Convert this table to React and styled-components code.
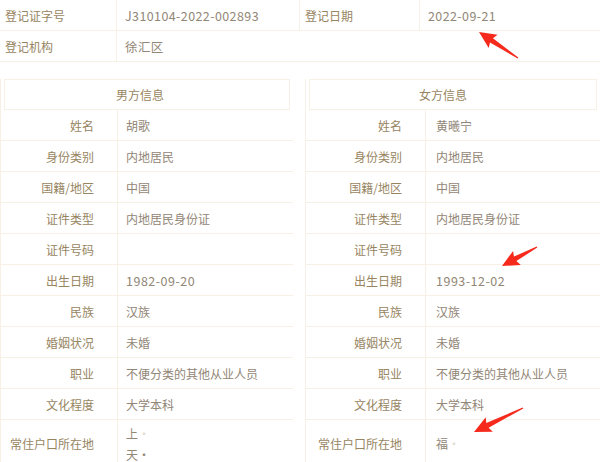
import React from "react";
import styled, { createGlobalStyle } from "styled-components";

const GlobalStyle = createGlobalStyle`
  html, body {
    margin: 0;
    padding: 0;
    background: #ffffff;
  }
  body {
    font-family: "Noto Sans CJK SC", "Noto Sans", sans-serif;
    font-size: 12px;
  }
`;

const LINE = "#f6f1e4";

const Page = styled.div`
  position: relative;
  width: 600px;
  height: 462px;
  overflow: hidden;
  background: #ffffff;
`;

const TopTable = styled.div`
  display: grid;
  grid-template-columns: 117px 183px 120px 1fr;
  grid-auto-rows: 31px;
`;

const TopCell = styled.div`
  display: flex;
  align-items: center;
  padding-left: ${(p) => (p.$value ? "8px" : "5px")};
  color: ${(p) => (p.$value ? "#928676" : "#978562")};
  border-bottom: 1px solid ${LINE};
  border-right: ${(p) => (p.$divider ? `1px solid ${LINE}` : "none")};
  font-size: ${(p) => (p.$value ? "12.5px" : "12px")};
  letter-spacing: ${(p) => (p.$value ? "0.4px" : "0")};
`;

const Panels = styled.div`
  display: flex;
  gap: 12px;
  margin-top: 17px;
`;

const Panel = styled.div`
  width: ${(p) => p.$width}px;
  display: flex;
  flex-direction: column;
  border-left: 1px solid ${LINE};
`;

const Heading = styled.div`
  height: 31px;
  margin: 0 3px 0 3px;
  display: flex;
  align-items: center;
  justify-content: center;
  padding-right: ${(p) => p.$shift}px;
  color: #978562;
  border: 1px solid ${LINE};
  box-sizing: border-box;
`;

const Row = styled.div`
  display: grid;
  grid-template-columns: ${(p) => p.$labelWidth}px 1fr;
  height: ${(p) => (p.$tall ? 48 : 31)}px;
  border-bottom: 1px solid ${LINE};
  box-sizing: border-box;
`;

const Label = styled.div`
  display: flex;
  align-items: center;
  justify-content: flex-end;
  padding-right: 23px;
  color: #978562;
  border-right: 1px solid ${LINE};
  white-space: nowrap;
`;

const Value = styled.div`
  display: flex;
  flex-direction: column;
  justify-content: center;
  padding-left: ${(p) => p.$pad}px;
  color: #928676;
  line-height: 21px;
  white-space: nowrap;
  font-size: ${(p) => (p.$digits ? "12.5px" : "12px")};
  letter-spacing: ${(p) => (p.$digits ? "0.5px" : "0")};
`;

const Faded = styled.span`
  color: #e2dbd0;
`;

const Arrows = styled.svg`
  position: absolute;
  left: 0;
  top: 0;
  pointer-events: none;
`;

const male = [
  ["姓名", "胡歌"],
  ["身份类别", "内地居民"],
  ["国籍/地区", "中国"],
  ["证件类型", "内地居民身份证"],
  ["证件号码", ""],
  ["出生日期", "1982-09-20", true],
  ["民族", "汉族"],
  ["婚姻状况", "未婚"],
  ["职业", "不便分类的其他从业人员"],
  ["文化程度", "大学本科"],
];

const female = [
  ["姓名", "黄曦宁"],
  ["身份类别", "内地居民"],
  ["国籍/地区", "中国"],
  ["证件类型", "内地居民身份证"],
  ["证件号码", ""],
  ["出生日期", "1993-12-02", true],
  ["民族", "汉族"],
  ["婚姻状况", "未婚"],
  ["职业", "不便分类的其他从业人员"],
  ["文化程度", "大学本科"],
];

// tip (tx, ty) -> tail (sx, sy), tapering shaft
function arrowPoints(tx, ty, sx, sy) {
  const dx = sx - tx;
  const dy = sy - ty;
  const len = Math.hypot(dx, dy);
  const ux = dx / len;
  const uy = dy / len;
  const nx = -uy;
  const ny = ux;
  const head = 17;
  const hw = 8;
  const sw = 2.6;
  const bx = tx + ux * head;
  const by = ty + uy * head;
  const pts = [
    [tx, ty],
    [bx + nx * hw, by + ny * hw],
    [bx - ux * 2 + nx * sw, by - uy * 2 + ny * sw],
    [sx + nx * 0.6, sy + ny * 0.6],
    [sx - nx * 0.6, sy - ny * 0.6],
    [bx - ux * 2 - nx * sw, by - uy * 2 - ny * sw],
    [bx - nx * hw, by - ny * hw],
  ];
  return pts.map((p) => p.map((v) => v.toFixed(1)).join(",")).join(" ");
}

function InfoPanel({ title, rows, width, labelWidth, pad, shift, address }) {
  return (
    <Panel $width={width}>
      <Heading $shift={shift}>{title}</Heading>
      {rows.map(([label, value, digits]) => (
        <Row key={label} $labelWidth={labelWidth}>
          <Label>{label}</Label>
          <Value $pad={pad} $digits={digits}>
            {value}
          </Value>
        </Row>
      ))}
      <Row $labelWidth={labelWidth} $tall>
        <Label>常住户口所在地</Label>
        <Value $pad={pad}>
          <span>
            {address[0]}
            <Faded>·</Faded>
          </span>
          <span>{address[1]}</span>
        </Value>
      </Row>
    </Panel>
  );
}

export default function App() {
  return (
    <>
      <GlobalStyle />
      <Page>
        <TopTable>
          <TopCell $divider>登记证字号</TopCell>
          <TopCell $value $divider>
            J310104-2022-002893
          </TopCell>
          <TopCell $divider>登记日期</TopCell>
          <TopCell $value>2022-09-21</TopCell>
          <TopCell $divider>登记机构</TopCell>
          <TopCell $value>徐汇区</TopCell>
          <TopCell />
          <TopCell />
        </TopTable>
        <Panels>
          <InfoPanel
            title="男方信息"
            rows={male}
            width={293}
            labelWidth={117}
            pad={8}
            shift={14}
            address={["上", "天·"]}
          />
          <InfoPanel
            title="女方信息"
            rows={female}
            width={295}
            labelWidth={120}
            pad={10}
            shift={20}
            address={["福", ""]}
          />
        </Panels>
        <Arrows width="600" height="462" viewBox="0 0 600 462">
          <polygon points={arrowPoints(479, 32, 518, 58)} fill="#f52a1c" />
          <polygon points={arrowPoints(502, 266, 537, 247)} fill="#f52a1c" />
          <polygon points={arrowPoints(474, 432, 523, 408)} fill="#f52a1c" />
        </Arrows>
      </Page>
    </>
  );
}
